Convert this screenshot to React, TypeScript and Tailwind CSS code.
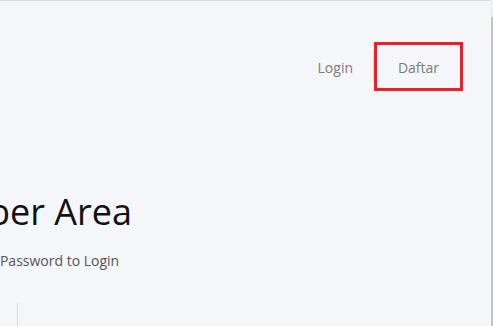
export default function App() {
  return (
    <div className="flex h-[326px] w-[493px] overflow-hidden bg-[#f5f6fa] font-['Open_Sans',sans-serif]">
      <div className="flex min-w-0 flex-1 flex-col border-t border-[#dcdde0]">
        <nav className="flex items-center justify-end pt-[41px] pr-[27px]">
          <a className="px-5 pt-[2px] text-[14px] leading-5 text-[#7b7b7b]">Login</a>
          <div className="h-8 w-px bg-[#dedfe2]" />
          <a className="flex h-[49px] w-[89px] items-center justify-center border-[3px] border-[#e8202a] pt-[2px] text-[14px] leading-5 text-[#7b7b7b]">
            Daftar
          </a>
        </nav>

        <section className="-ml-[133px] flex w-[300px] flex-col items-center">
          <h1 className="mt-[101px] whitespace-nowrap text-[36px] leading-10 font-normal text-[#111]">Member Area</h1>
          <p className="mt-[19px] whitespace-nowrap text-[14px] leading-5 text-[#555]">Username &amp; Password to Login</p>
          <div className="mt-[32px] h-10 w-px bg-[#dcdde0]" />
        </section>
      </div>

      <div className="flex w-[3px] flex-col">
        <div className="h-[17px] bg-[#eeeff1]" />
        <div className="flex flex-1">
          <div className="w-px bg-[#f9f9fa]" />
          <div className="flex-1 bg-[#c2c3c5]" />
        </div>
      </div>
    </div>
  );
}
